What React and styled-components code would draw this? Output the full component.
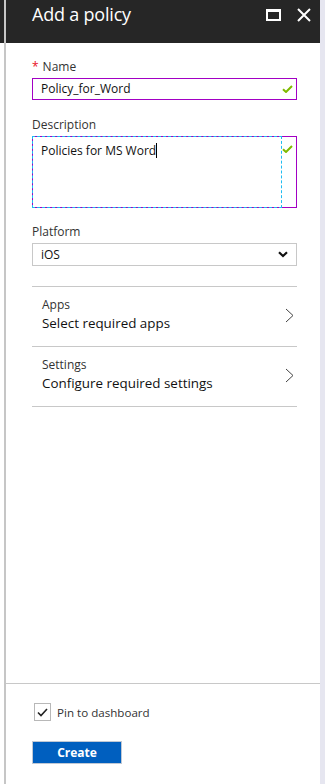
import React from "react";
import styled, { createGlobalStyle } from "styled-components";

const GlobalStyle = createGlobalStyle`
  body {
    margin: 0;
    background: #e6e6f0;
    font-family: "Open Sans", "Noto Sans", sans-serif;
  }
`;

const Page = styled.div`
  display: flex;
  height: 784px;
`;

const Panel = styled.div`
  width: 320px;
  display: flex;
  flex-direction: column;
  background: linear-gradient(to right, #fff 4px, #c6c6c6 4px 6px, #fff 6px);
`;

const Header = styled.header`
  height: 43px;
  display: flex;
  align-items: flex-start;
  justify-content: space-between;
  padding: 0 9px 0 32px;
  background: linear-gradient(to right, #262626 4px, #c6c6c6 4px 6px, #262626 6px);
`;

const Title = styled.h1`
  margin: 0;
  padding-top: 1px;
  font-size: 18px;
  line-height: 26px;
  font-weight: 400;
  color: #fff;
  letter-spacing: -0.2px;
`;

const HeaderIcons = styled.div`
  display: flex;
  align-items: center;
  gap: 16px;
  padding-top: 8px;
`;

const Body = styled.div`
  flex: 1;
  padding: 16px 23px 0 32px;
  display: flex;
  flex-direction: column;
`;

const Label = styled.div`
  font-size: 12px;
  line-height: 16px;
  color: #333;
  margin-bottom: 3px;
  margin-top: ${(p) => p.top || 0}px;
`;

const Star = styled.span`
  color: #e81123;
  margin-right: 4px;
`;

const Field = styled.div`
  display: flex;
  align-items: ${(p) => (p.multi ? "flex-start" : "center")};
  height: ${(p) => p.h}px;
  box-sizing: border-box;
  border: 1px solid ${(p) => p.color};
  padding-right: 3px;
`;

const Value = styled.div`
  flex: 1;
  font-size: 12px;
  line-height: 18px;
  color: #111;
  padding-left: 8px;
`;

const Focus = styled.div`
  align-self: stretch;
  width: 251px;
  margin: -1px 0 -1px -1px;
  border: 1px dashed #1fbcf0;
  box-sizing: border-box;
  padding: 5px 8px;
  font-size: 12px;
  line-height: 18px;
  color: #111;
`;

const Caret = styled.span`
  display: inline-block;
  width: 1px;
  height: 15px;
  background: #000;
  vertical-align: -3px;
`;

const CheckSlot = styled.div`
  padding-top: ${(p) => p.top || 0}px;
  display: flex;
`;

const Divider = styled.div`
  height: 1px;
  background: #c8c8c8;
  margin-top: ${(p) => p.top || 0}px;
`;

const NavRow = styled.div`
  display: flex;
  align-items: center;
  justify-content: space-between;
  padding: 10px 3px 13px 10px;
  border-bottom: 1px solid #c8c8c8;
`;

const NavLabel = styled.div`
  font-size: 12px;
  line-height: 16px;
  color: #333;
`;

const NavValue = styled.div`
  font-size: 13.4px;
  line-height: 20px;
  color: #111;
`;

const Footer = styled.footer`
  margin-left: 6px;
  border-top: 1px solid #c8c8c8;
  padding: 19px 0 20px 28px;
  display: flex;
  flex-direction: column;
  gap: 20px;
`;

const CheckRow = styled.label`
  display: flex;
  align-items: center;
  gap: 6px;
  font-size: 11.6px;
  color: #333;
`;

const Box = styled.span`
  width: 17px;
  height: 18px;
  box-sizing: border-box;
  border: 1px solid #b8b8b8;
  display: flex;
  align-items: center;
  justify-content: center;
`;

const Button = styled.button`
  width: 90px;
  height: 23px;
  margin-left: -2px;
  background: #005fbf;
  border: 1px solid #c0c8d4;
  color: #fff;
  font-family: "Open Sans", sans-serif;
  font-weight: 700;
  font-size: 12px;
  padding: 0;
`;

const GreenCheck = () => (
  <svg width="11" height="8" viewBox="0 0 11 8">
    <path d="M1 4.2 L4 7 L10 1" fill="none" stroke="#7fba00" strokeWidth="2" />
  </svg>
);

const Chevron = () => (
  <svg width="9" height="15" viewBox="0 0 9 15">
    <path d="M1 1 L8 7.5 L1 14" fill="none" stroke="#444" strokeWidth="1" />
  </svg>
);

const DownArrow = () => (
  <svg width="10" height="7" viewBox="0 0 10 7">
    <path d="M1 1.2 L5 5 L9 1.2" fill="none" stroke="#111" strokeWidth="2.2" />
  </svg>
);

const Spacer = styled.span`
  width: ${(p) => p.w}px;
`;

const App = () => (
  <Page>
    <GlobalStyle />
    <Panel>
      <Header>
        <Title>Add a policy</Title>
        <HeaderIcons>
          <svg width="15" height="12" viewBox="0 0 15 12">
            <rect x="1" y="1.5" width="13" height="9.5" fill="none" stroke="#fff" strokeWidth="2" />
            <rect x="0" y="0" width="15" height="3" fill="#fff" />
          </svg>
          <svg width="14" height="14" viewBox="0 0 14 14">
            <path d="M1 1 L13 13 M13 1 L1 13" stroke="#fff" strokeWidth="2" />
          </svg>
        </HeaderIcons>
      </Header>
      <Body>
        <Label>
          <Star>*</Star>Name
        </Label>
        <Field h={22} color="#a200c4">
          <Value>Policy_for_Word</Value>
          <GreenCheck />
        </Field>

        <Label top={17}>Description</Label>
        <Field h={72} color="#a200c4" multi>
          <Focus>
            Policies for MS Word<Caret />
          </Focus>
          <CheckSlot top={8}>
            <GreenCheck />
          </CheckSlot>
        </Field>

        <Label top={16}>Platform</Label>
        <Field h={23} color="#c8c8c8">
          <Value>iOS</Value>
          <CheckSlot>
            <DownArrow />
            <Spacer w={5} />
          </CheckSlot>
        </Field>

        <Divider top={20} />
        <NavRow>
          <div>
            <NavLabel>Apps</NavLabel>
            <NavValue>Select required apps</NavValue>
          </div>
          <Chevron />
        </NavRow>
        <NavRow>
          <div>
            <NavLabel>Settings</NavLabel>
            <NavValue>Configure required settings</NavValue>
          </div>
          <Chevron />
        </NavRow>
      </Body>
      <Footer>
        <CheckRow>
          <Box>
            <svg width="11" height="9" viewBox="0 0 11 9">
              <path d="M1 4.5 L4 7.5 L10 1" fill="none" stroke="#222" strokeWidth="1.6" />
            </svg>
          </Box>
          Pin to dashboard
        </CheckRow>
        <Button>Create</Button>
      </Footer>
    </Panel>
  </Page>
);

export default App;
